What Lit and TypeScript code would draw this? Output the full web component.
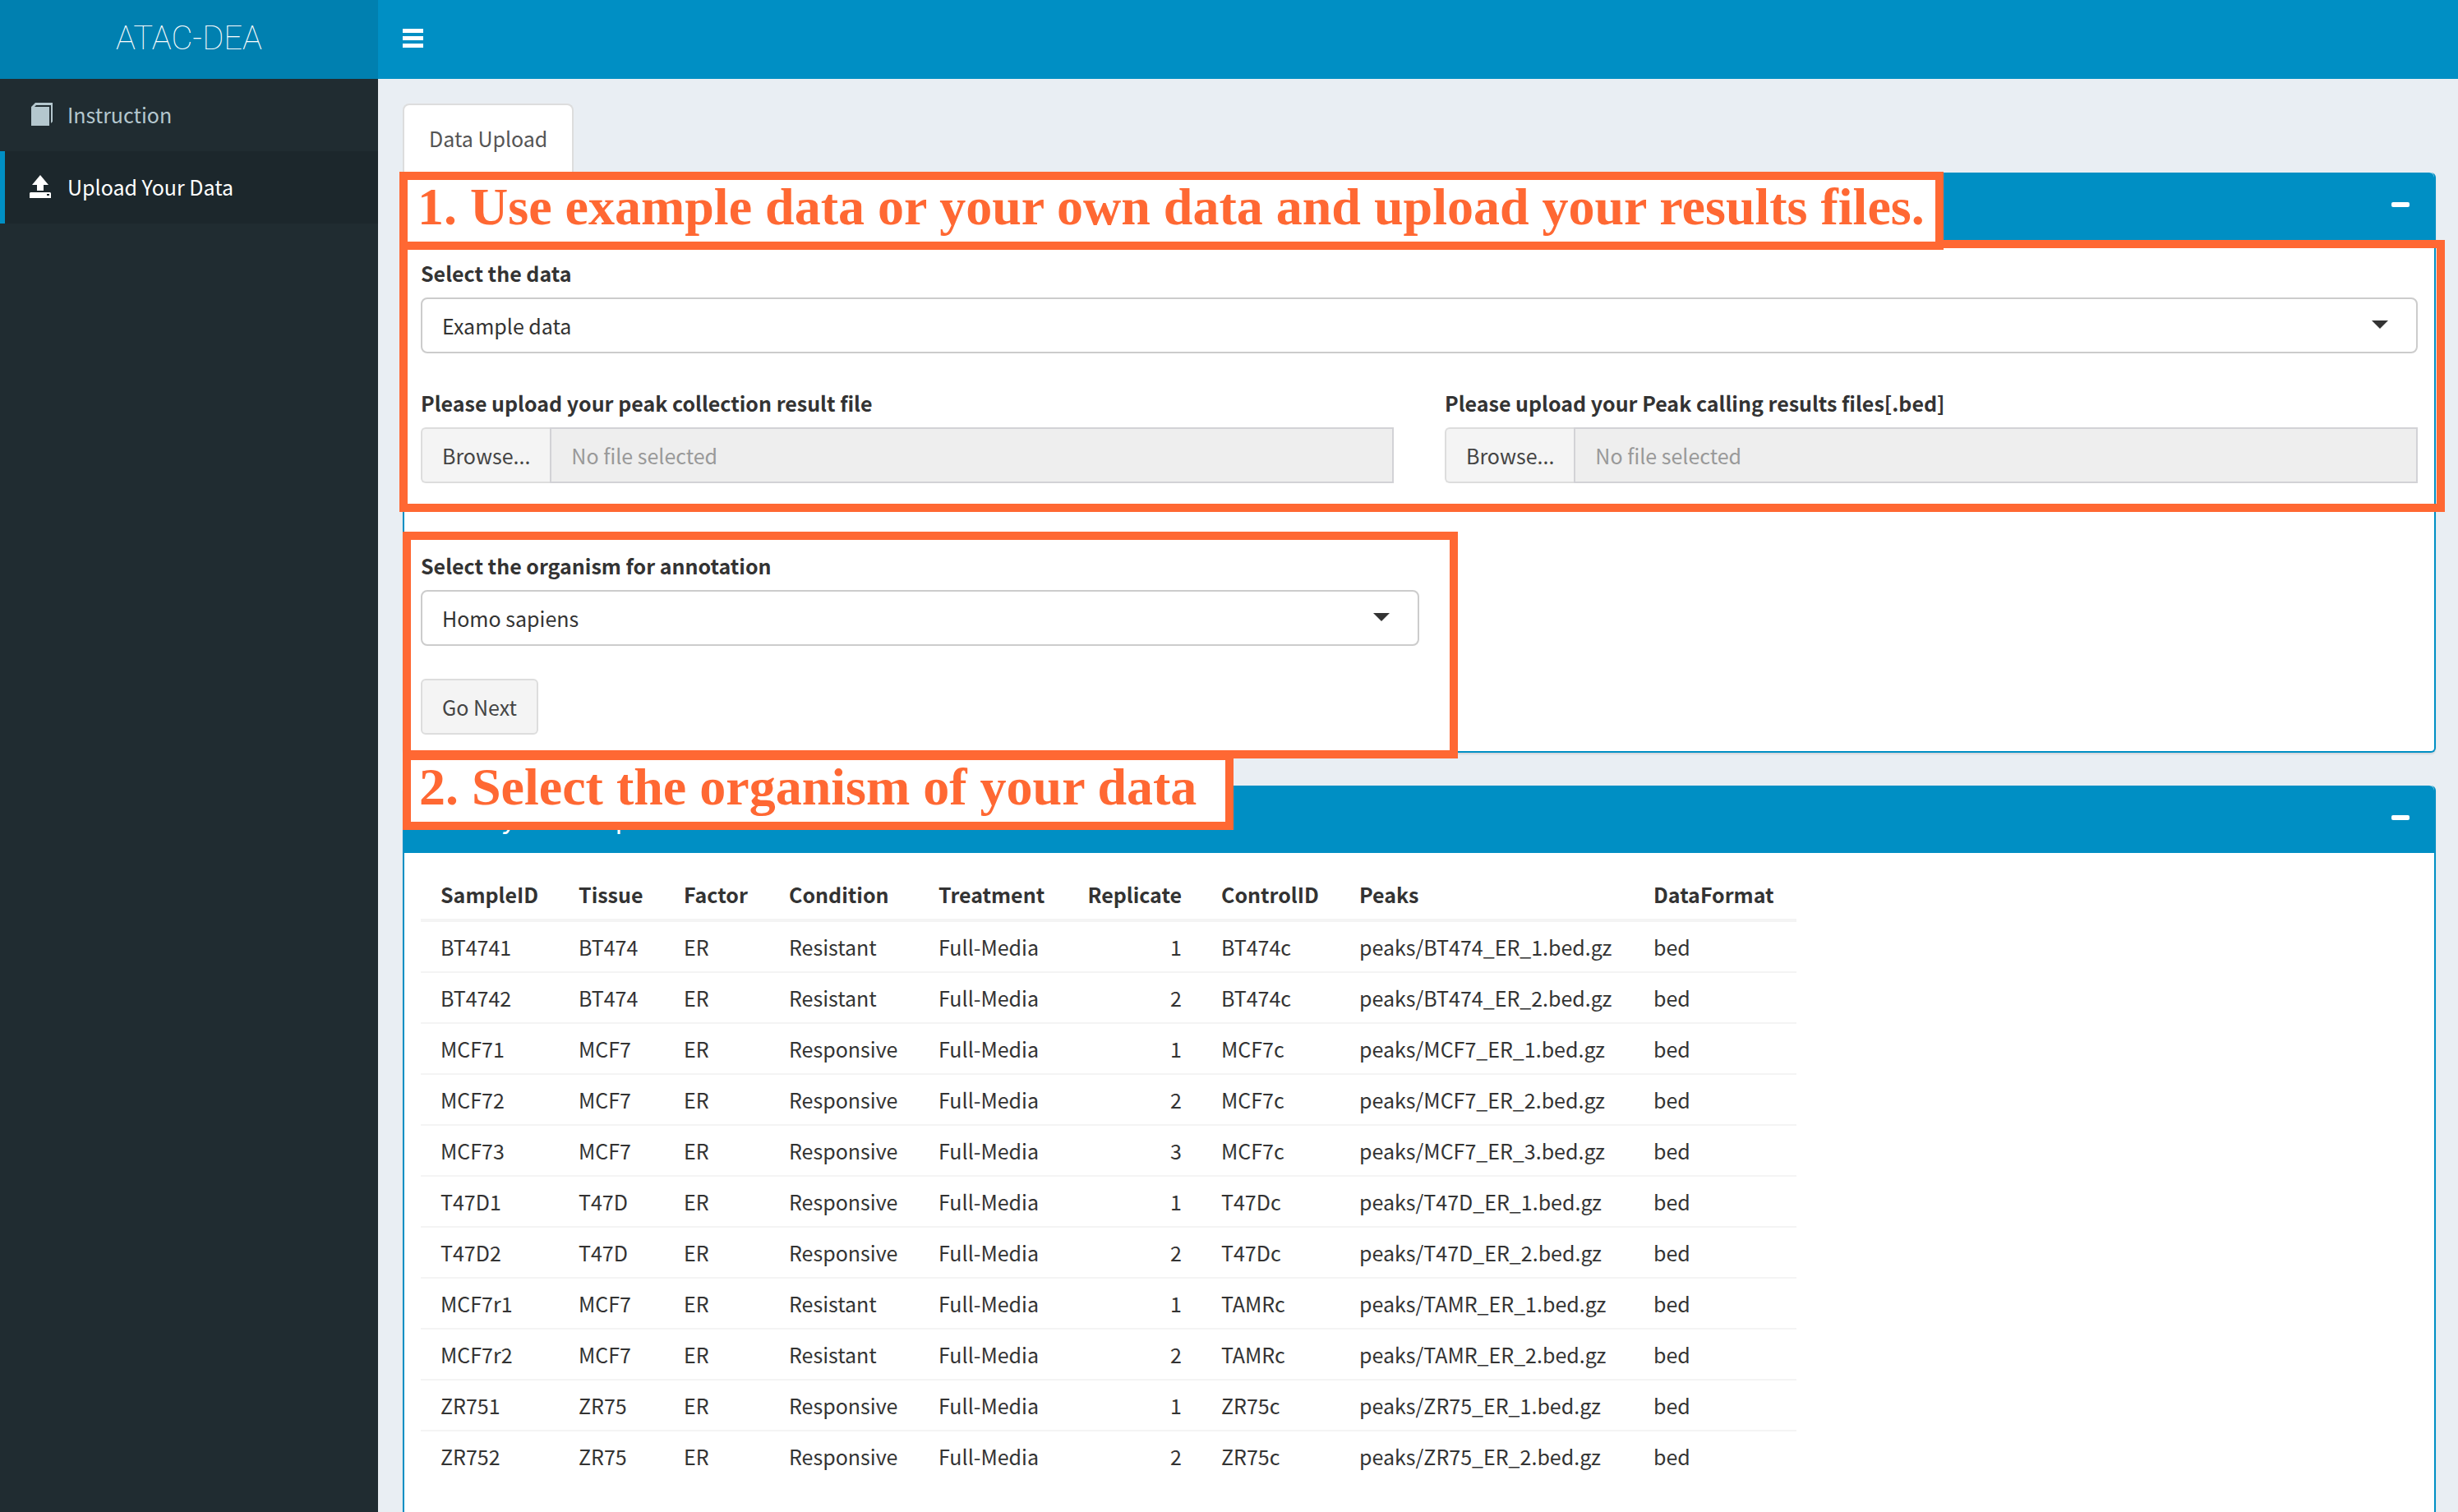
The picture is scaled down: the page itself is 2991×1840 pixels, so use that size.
import { LitElement, html, css, svg } from "lit";
import { customElement } from "lit/decorators.js";

type Sample = [string, string, string, string, string, number, string, string, string];

const COLUMNS = ["SampleID", "Tissue", "Factor", "Condition", "Treatment", "Replicate", "ControlID", "Peaks", "DataFormat"];

const sample = (id: string, tissue: string, condition: string, rep: number, control: string, peak: string): Sample =>
  [id, tissue, "ER", condition, "Full-Media", rep, control, `peaks/${peak}_ER_${rep}.bed.gz`, "bed"];

const SAMPLES: Sample[] = [
  sample("BT4741", "BT474", "Resistant", 1, "BT474c", "BT474"),
  sample("BT4742", "BT474", "Resistant", 2, "BT474c", "BT474"),
  sample("MCF71", "MCF7", "Responsive", 1, "MCF7c", "MCF7"),
  sample("MCF72", "MCF7", "Responsive", 2, "MCF7c", "MCF7"),
  sample("MCF73", "MCF7", "Responsive", 3, "MCF7c", "MCF7"),
  sample("T47D1", "T47D", "Responsive", 1, "T47Dc", "T47D"),
  sample("T47D2", "T47D", "Responsive", 2, "T47Dc", "T47D"),
  sample("MCF7r1", "MCF7", "Resistant", 1, "TAMRc", "TAMR"),
  sample("MCF7r2", "MCF7", "Resistant", 2, "TAMRc", "TAMR"),
  sample("ZR751", "ZR75", "Responsive", 1, "ZR75c", "ZR75"),
  sample("ZR752", "ZR75", "Responsive", 2, "ZR75c", "ZR75"),
];

const bookIcon = svg`<path d="M2 5L7 0H28V23L26 25V3H8L6 5H24V28H2Z"/>`;
const uploadIcon = svg`<path d="M13 0L23 12H17V19H9V12H3Z"/><path fill-rule="evenodd" d="M1 21H25L26 22V28H0V22ZM21 23V25H24V23Z"/>`;

@customElement("app-root")
export class AppRoot extends LitElement {
  static styles = css`
    :host {
      display: block;
      --blue: #008fc4;
      --orange: #ff6833;
      --line: #cccccc;
      font-family: "Noto Sans CJK SC", "Noto Sans", sans-serif;
      font-size: 25px;
      line-height: 40px;
      color: #333333;
    }
    * { box-sizing: border-box; }
    .page {
      display: grid;
      grid-template-columns: 460px minmax(0, 1fr);
      grid-template-rows: 96px minmax(0, 1fr);
      height: 100vh;
      background: #e9eef3;
    }
    .logo {
      display: flex;
      align-items: center;
      justify-content: center;
      padding-bottom: 2px;
      background: #0080b0;
      color: #ffffff;
      font-family: Roboto, sans-serif;
      font-weight: 100;
      font-size: 40px;
      text-decoration: none;
    }
    .topbar {
      display: flex;
      align-items: center;
      padding: 0 30px 4px;
      background: var(--blue);
    }
    .icon-button {
      display: flex;
      padding: 0;
      border: 0;
      background: none;
      color: #ffffff;
    }
    svg { display: block; fill: currentColor; }
    .sidebar { background: #202c31; }
    .menu { margin: 0; padding: 0; list-style: none; }
    .menu-link {
      display: flex;
      align-items: center;
      gap: 18px;
      height: 88px;
      padding: 0 30px 2px;
      border-left: 6px solid transparent;
      color: #b4c7ce;
      text-decoration: none;
    }
    .menu-link.active {
      border-left-color: var(--blue);
      background: #1c272c;
      color: #ffffff;
    }
    .content {
      overflow-y: auto;
      scrollbar-width: none;
      padding: 30px 27px 30px 30px;
    }
    .tabs { display: flex; }
    .tab {
      padding: 20px 30px 22px;
      border: 2px solid #dddddd;
      border-bottom: 0;
      border-radius: 8px 8px 0 0;
      background: #ffffff;
      color: #555555;
      text-decoration: none;
    }
    .box {
      position: relative;
      margin-bottom: 40px;
      border: 2px solid var(--blue);
      border-top: 0;
      border-radius: 6px;
      background: #ffffff;
      box-shadow: 0 2px 2px rgba(0, 0, 0, 0.1);
    }
    .box-header {
      display: flex;
      align-items: flex-start;
      height: 82px;
      padding: 20px 30px 20px 20px;
      border-radius: 6px 6px 0 0;
      background: var(--blue);
      color: #ffffff;
    }
    .box-title { margin: 0; font-size: 32px; line-height: 36px; font-weight: 400; }
    .box-header .icon-button { margin-left: auto; padding: 16px 0; }
    .box-body { padding: 20px; }
    .group { position: relative; display: grid; gap: 40px; }
    .group.organism { width: 50%; margin-top: 80px; justify-items: start; }
    .field { display: grid; gap: 10px; width: 100%; }
    .label { font-weight: 700; }
    .files { display: grid; grid-template-columns: 1fr 1fr; gap: 62px; }
    .select-wrap { position: relative; }
    .select {
      width: 100%;
      height: 68px;
      padding: 0 24px;
      border: 2px solid var(--line);
      border-radius: 8px;
      background: #ffffff;
      color: inherit;
      font: inherit;
      appearance: none;
    }
    .caret { position: absolute; right: 36px; top: 28px; pointer-events: none; }
    .file { display: flex; height: 68px; }
    .button {
      display: flex;
      align-items: center;
      height: 68px;
      padding: 0 24px;
      border: 2px solid #dddddd;
      border-radius: 6px;
      background: #f4f4f4;
      color: #444444;
      font: inherit;
    }
    .file .button { border-radius: 6px 0 0 6px; border-right: 0; }
    .file-picker { position: absolute; width: 1px; height: 1px; opacity: 0; }
    .file-name {
      flex: 1;
      min-width: 0;
      padding: 0 24px;
      border: 2px solid #d2d2d6;
      border-radius: 0;
      background: #eeeeee;
      font: inherit;
    }
    .file-name::placeholder { color: #999999; opacity: 1; }
    .frame {
      position: absolute;
      border: 10px solid var(--orange);
      pointer-events: none;
    }
    .frame.data { inset: -20px -33px -35px -26px; }
    .frame.species { inset: -21px -47px -29px -22px; }
    .callout {
      position: absolute;
      z-index: 2;
      height: 95px;
      border: 10px solid var(--orange);
      background: #ffffff;
      color: var(--orange);
      font-family: "Liberation Serif", serif;
      font-weight: 700;
      font-size: 64px;
      line-height: 66px;
      white-space: nowrap;
    }
    .callout.first { left: -6px; top: -1px; width: 1879px; padding-left: 12px; }
    .callout.second { left: -2px; top: -41px; width: 1011px; padding-left: 10px; }
    .samples { width: 1672px; border-spacing: 0; table-layout: fixed; margin-bottom: 40px; }
    .w128 { width: 128px; }
    .w164 { width: 164px; }
    .w168 { width: 168px; }
    .w180 { width: 180px; }
    .w182 { width: 182px; }
    .w198 { width: 198px; }
    .w358 { width: 358px; }
    .samples th, .samples td { padding: 10px 24px; text-align: left; white-space: nowrap; }
    .samples th { border-bottom: 4px solid #f4f4f4; }
    .samples tr + tr td { border-top: 2px solid #f4f4f4; }
    .samples .num { text-align: right; }
  `;

  private caret() {
    return html`<svg class="caret" width="20" height="10" viewBox="0 0 20 10" aria-hidden="true"><path d="M0 0H20L10 10Z"/></svg>`;
  }

  private select(id: string, label: string, value: string) {
    return html`<div class="field">
      <label class="label" for=${id}>${label}</label>
      <div class="select-wrap">
        <select class="select" id=${id}><option>${value}</option></select>
        ${this.caret()}
      </div>
    </div>`;
  }

  private fileInput(id: string, label: string) {
    return html`<div class="field">
      <label class="label" for=${id}>${label}</label>
      <div class="file">
        <label class="button">Browse...<input class="file-picker" id=${id} type="file"></label>
        <input class="file-name" type="text" readonly placeholder="No file selected" aria-label=${label}>
      </div>
    </div>`;
  }

  private collapseButton() {
    return html`<button class="icon-button" aria-label="Collapse">
      <svg width="22" height="6" viewBox="0 0 22 6"><rect width="22" height="6" rx="2"/></svg>
    </button>`;
  }

  render() {
    return html`<div class="page">
      <a class="logo" href="#">ATAC-DEA</a>
      <header class="topbar">
        <button class="icon-button" aria-label="Toggle navigation">
          <svg width="25" height="23" viewBox="0 0 25 23"><path d="M0 0H25V5H0ZM0 9H25V14H0ZM0 18H25V23H0Z"/></svg>
        </button>
      </header>
      <nav class="sidebar">
        <ul class="menu">
          <li><a class="menu-link" href="#instruction"><svg width="28" height="28" viewBox="0 0 28 28">${bookIcon}</svg>Instruction</a></li>
          <li><a class="menu-link active" href="#upload"><svg width="28" height="28" viewBox="0 0 28 28">${uploadIcon}</svg>Upload Your Data</a></li>
        </ul>
      </nav>
      <main class="content">
        <nav class="tabs"><a class="tab" href="#data-upload">Data Upload</a></nav>
        <section class="box">
          <div class="box-header">${this.collapseButton()}</div>
          <div class="box-body">
            <div class="group">
              ${this.select("data", "Select the data", "Example data")}
              <div class="files">
                ${this.fileInput("collection", "Please upload your peak collection result file")}
                ${this.fileInput("calling", "Please upload your Peak calling results files[.bed]")}
              </div>
              <div class="frame data"></div>
            </div>
            <div class="group organism">
              ${this.select("organism", "Select the organism for annotation", "Homo sapiens")}
              <button class="button">Go Next</button>
              <div class="frame species"></div>
            </div>
          </div>
          <div class="callout first">1. Use example data or your own data and upload your results files.</div>
        </section>
        <section class="box">
          <div class="box-header"><h3 class="box-title">Select your sample</h3>${this.collapseButton()}</div>
          <div class="box-body">
            <table class="samples">
              <colgroup>
                <col class="w168"><col class="w128"><col class="w128"><col class="w182"><col class="w180">
                <col class="w164"><col class="w168"><col class="w358"><col class="w198">
              </colgroup>
              <thead><tr>${COLUMNS.map((name, i) => html`<th class=${i === 5 ? "num" : ""}>${name}</th>`)}</tr></thead>
              <tbody>${SAMPLES.map((row) => html`<tr>${row.map((cell, i) => html`<td class=${i === 5 ? "num" : ""}>${cell}</td>`)}</tr>`)}</tbody>
            </table>
          </div>
          <div class="callout second">2. Select the organism of your data</div>
        </section>
      </main>
    </div>`;
  }
}
